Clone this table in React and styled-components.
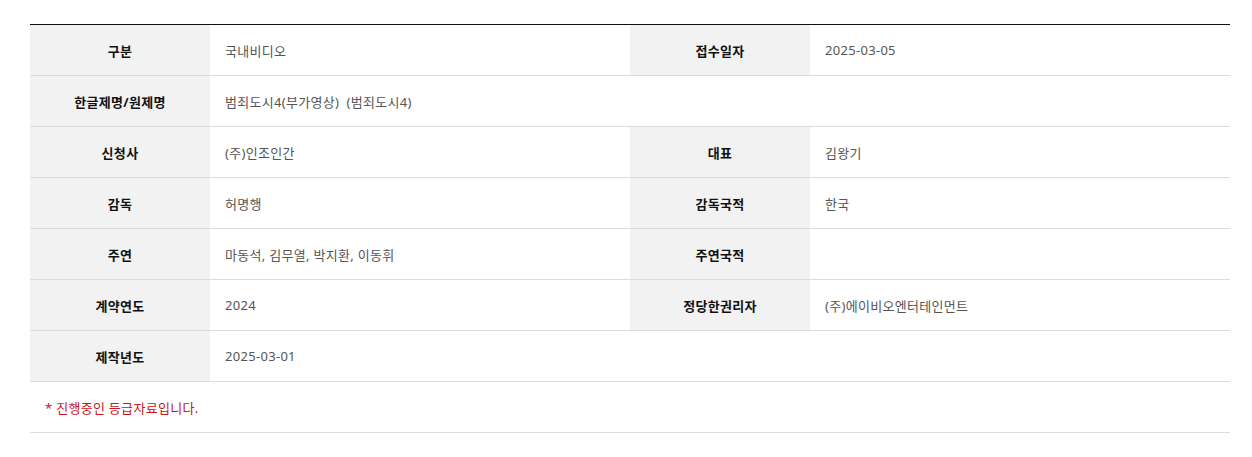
import React from 'react';
import styled, { createGlobalStyle } from 'styled-components';

const GlobalStyle = createGlobalStyle`
  body {
    margin: 0;
    background: #fff;
    font-family: "Noto Sans", "Noto Sans CJK KR", sans-serif;
  }
`;

const rows = [
  [['구분', '국내비디오'], ['접수일자', '2025-03-05']],
  [['한글제명/원제명', '범죄도시4(부가영상)  (범죄도시4)']],
  [['신청사', '(주)인조인간'], ['대표', '김왕기']],
  [['감독', '허명행'], ['감독국적', '한국']],
  [['주연', '마동석, 김무열, 박지환, 이동휘'], ['주연국적', '']],
  [['계약연도', '2024'], ['정당한권리자', '(주)에이비오엔터테인먼트']],
  [['제작년도', '2025-03-01']],
];

const App = () => {
  return (
    <Wrapper>
      <GlobalStyle />
      <Table>
        <colgroup>
          <Col $w={180} />
          <Col $w={420} />
          <Col $w={180} />
          <Col $w={420} />
        </colgroup>
        <tbody>
          {rows.map((row, i) => (
            <tr key={i}>
              {row.map(([label, value]) => (
                <React.Fragment key={label}>
                  <Th>{label}</Th>
                  <Td colSpan={row.length === 1 ? 3 : 1}>{value}</Td>
                </React.Fragment>
              ))}
            </tr>
          ))}
          <tr>
            <Note colSpan={4}>* 진행중인 등급자료입니다.</Note>
          </tr>
        </tbody>
      </Table>
    </Wrapper>
  );
};

const Wrapper = styled.div`
  padding: 24px 22px 0 30px;
`;

const Table = styled.table`
  width: 1200px;
  border-collapse: collapse;
  table-layout: fixed;
  border-top: 1px solid #111;
`;

const Col = styled.col`
  width: ${(p) => p.$w}px;
`;

const Th = styled.th`
  height: 50px;
  padding: 0;
  background: #f2f2f2;
  border-bottom: 1px solid #dcdcdc;
  font-size: 13px;
  font-weight: 700;
  letter-spacing: 0.3px;
  color: #111;
  text-align: center;
`;

const Td = styled.td`
  height: 50px;
  padding: 0 15px;
  border-bottom: 1px solid #dcdcdc;
  font-size: 13px;
  letter-spacing: 0.3px;
  color: #555;
  white-space: pre;
`;

const Note = styled.td`
  height: 50px;
  padding: 0 15px;
  border-bottom: 1px solid #dcdcdc;
  font-size: 13px;
  letter-spacing: 0.3px;
  color: #c8161d;
`;

export default App;
